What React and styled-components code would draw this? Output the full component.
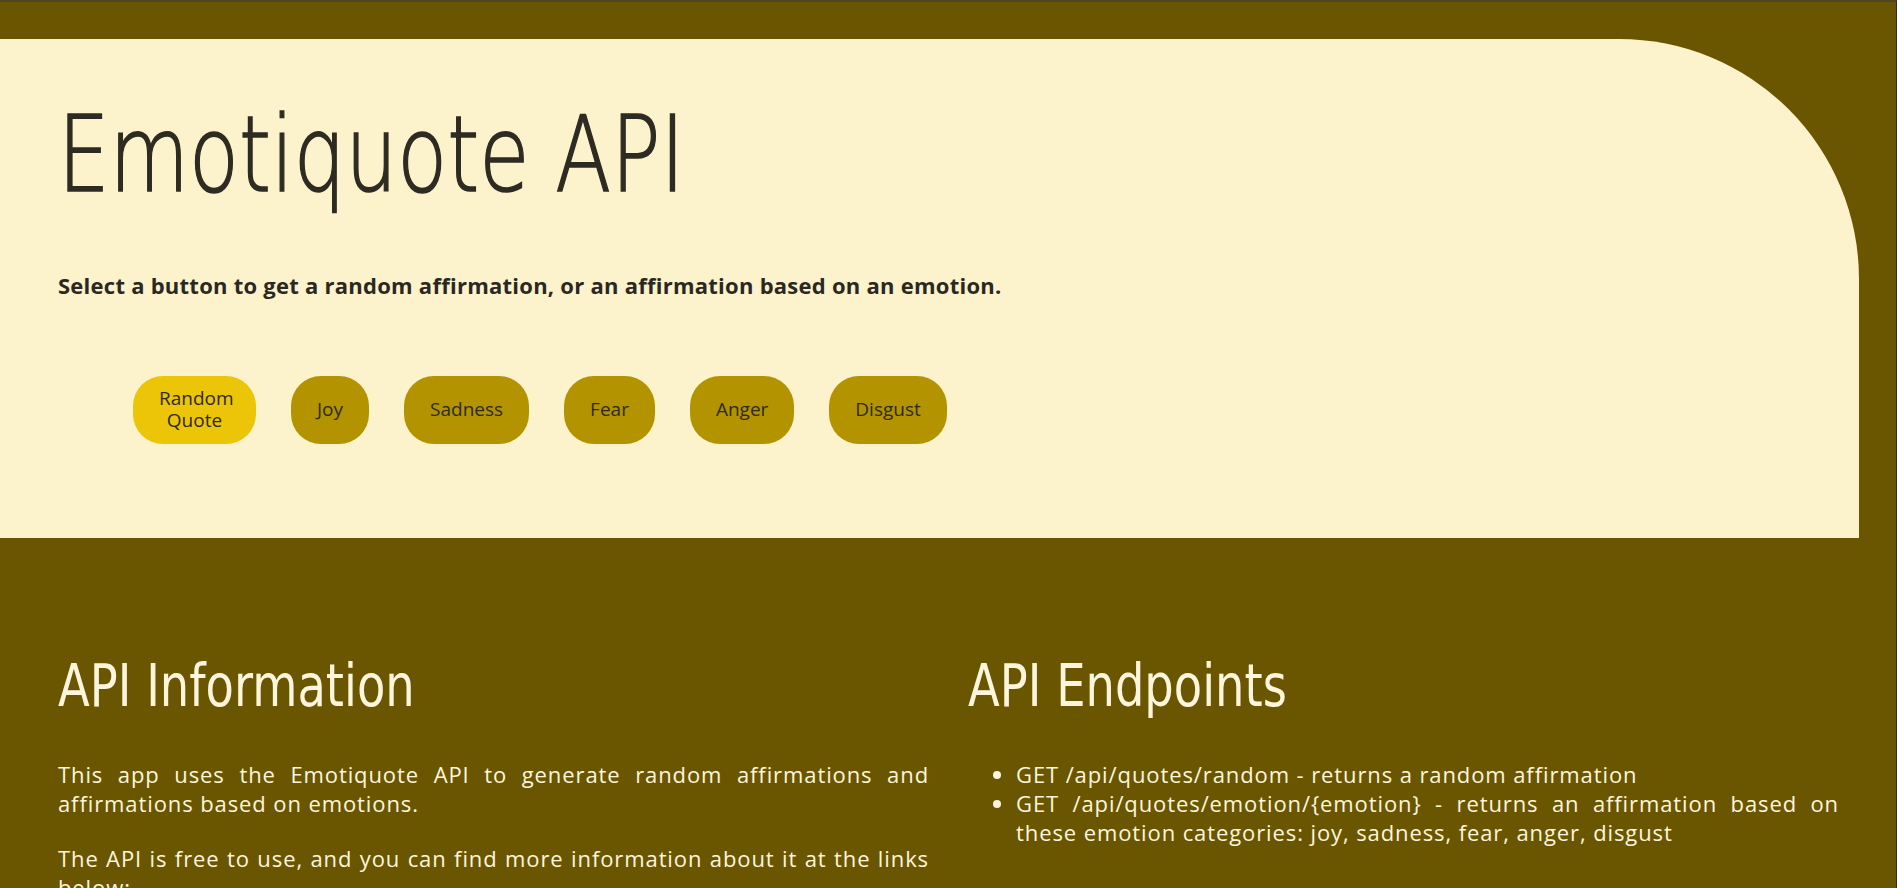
import React from 'react';
import styled, { createGlobalStyle } from 'styled-components';

const GlobalStyle = createGlobalStyle`
	html, body {
		margin: 0;
		padding: 0;
		background: #6a5500;
	}
	body {
		font-family: "Open Sans", sans-serif;
	}
`;

const HEADING_FONT = `"DejaVu Sans", "Open Sans", sans-serif`;

const Page = styled.div`
	min-height: 100vh;
	background: #6a5500;
	border-top: 2px solid #4f4522;
	border-right: 1px solid #2f2e1d;
	box-sizing: border-box;
	padding-top: 37px;
	overflow: hidden;
`;

const Hero = styled.section`
	background: #fcf3cd;
	margin-right: 37px;
	height: 499px;
	border-top-right-radius: 240px;
	padding: 0 58px;
	box-sizing: border-box;
	display: flex;
	flex-direction: column;
`;

const Title = styled.h1`
	margin: 52px 0 0;
	font-family: ${HEADING_FONT};
	font-weight: 200;
	font-size: 106px;
	line-height: 1.2;
	color: #2e2b22;
	-webkit-text-stroke: 1.6px #2e2b22;
	transform: scaleX(${(p) => p.$squeeze || 1});
	transform-origin: left center;
	white-space: nowrap;
`;

const Lead = styled.p`
	margin: 52px 0 0;
	font-family: "Open Sans", sans-serif;
	font-weight: 700;
	font-size: 22px;
	letter-spacing: 0.25px;
	color: #2b281f;
`;

const ButtonRow = styled.div`
	display: flex;
	align-items: center;
	gap: 35px;
	margin-top: 76px;
	padding-left: 75px;
`;

const EmotionButton = styled.button`
	height: 68px;
	padding: 0 26px;
	border: none;
	border-radius: 30px;
	background: ${(p) => (p.$active ? '#ecc508' : '#b39300')};
	color: #2e2a1e;
	font-family: "Open Sans", sans-serif;
	font-size: 19px;
	line-height: 1.15;
	max-width: ${(p) => (p.$active ? '123px' : 'none')};
	cursor: pointer;
`;

const Info = styled.section`
	display: grid;
	grid-template-columns: 1fr 1fr;
	column-gap: 39px;
	padding: 0 57px 0 58px;
	color: #fdf6dc;
`;

const Column = styled.div`
	display: flex;
	flex-direction: column;
`;

const SectionTitle = styled.h2`
	margin: 114px 0 38px;
	font-family: ${HEADING_FONT};
	font-weight: 400;
	font-size: 58px;
	line-height: 1.2;
	color: #fdf6dc;
	transform: scaleX(${(p) => p.$squeeze || 1});
	transform-origin: left center;
	white-space: nowrap;
`;

const Paragraph = styled.p`
	margin: 0 0 26px;
	font-family: "Open Sans", sans-serif;
	font-size: 22px;
	letter-spacing: 0.9px;
	line-height: 29px;
	text-align: justify;
`;

const EndpointList = styled.ul`
	margin: 0;
	padding-left: 48px;
	font-family: "Open Sans", sans-serif;
	font-size: 22px;
	letter-spacing: 0.9px;
	line-height: 29px;
	text-align: justify;
`;

const buttons = ['Joy', 'Sadness', 'Fear', 'Anger', 'Disgust'];

export default function App() {
	return (
		<Page>
			<GlobalStyle />
			<Hero>
				<Title $squeeze={0.77}>Emotiquote API</Title>
				<Lead>Select a button to get a random affirmation, or an affirmation based on an emotion.</Lead>
				<ButtonRow>
					<EmotionButton $active>Random Quote</EmotionButton>
					{buttons.map((b) => (
						<EmotionButton key={b}>{b}</EmotionButton>
					))}
				</ButtonRow>
			</Hero>
			<Info>
				<Column>
					<SectionTitle $squeeze={0.8}>API Information</SectionTitle>
					<Paragraph>
						This app uses the Emotiquote API to generate random affirmations and affirmations based on emotions.
					</Paragraph>
					<Paragraph>
						The API is free to use, and you can find more information about it at the links below:
					</Paragraph>
				</Column>
				<Column>
					<SectionTitle $squeeze={0.8}>API Endpoints</SectionTitle>
					<EndpointList>
						<li>GET /api/quotes/random - returns a random affirmation</li>
						<li>
							GET /api/quotes/emotion/&#123;emotion&#125; - returns an affirmation based on these emotion
							categories: joy, sadness, fear, anger, disgust
						</li>
					</EndpointList>
				</Column>
			</Info>
		</Page>
	);
}
